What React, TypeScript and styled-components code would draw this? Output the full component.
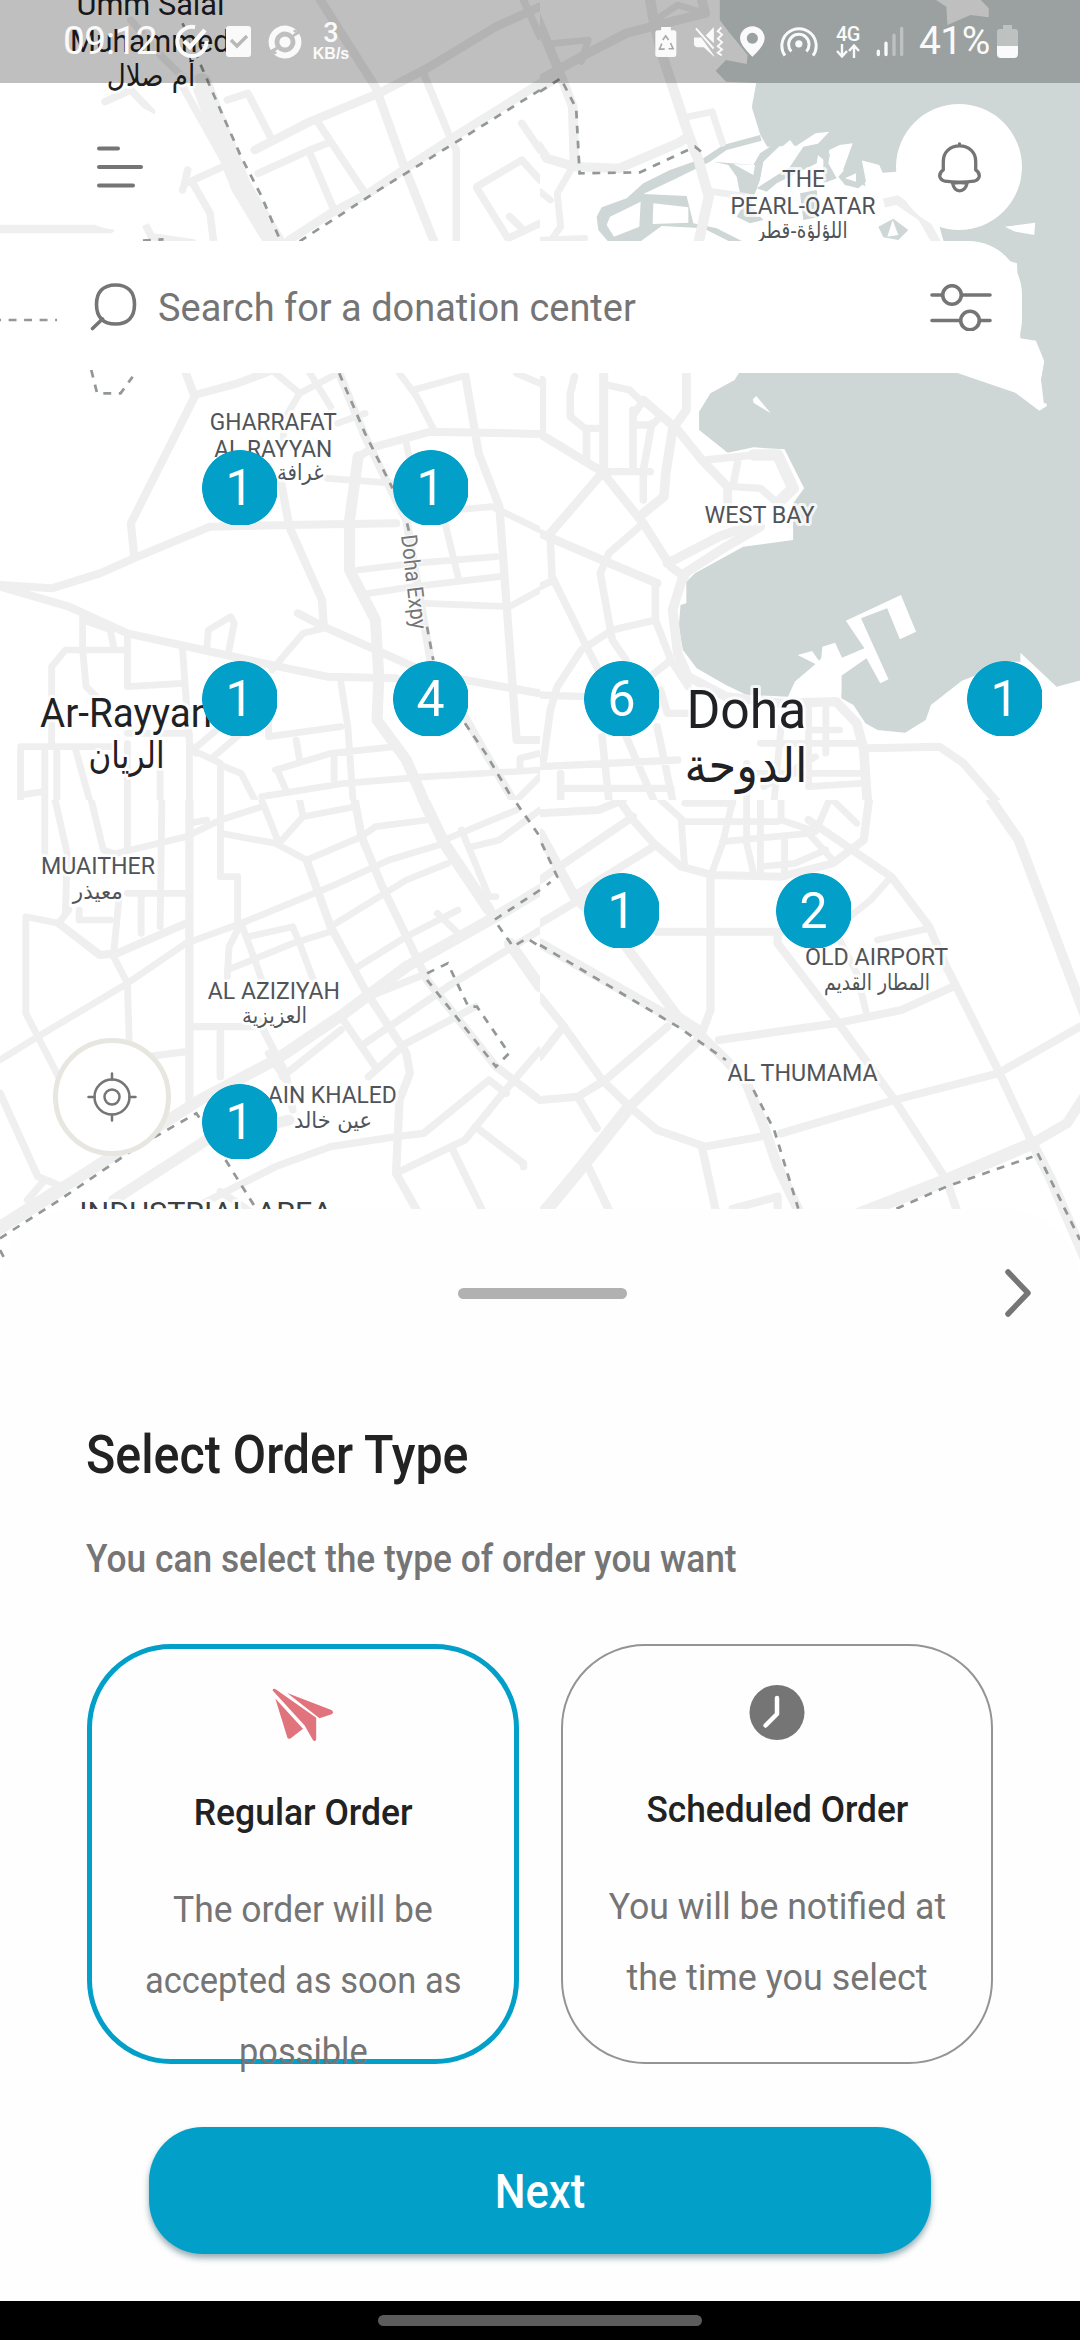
import React from "react";
import styled, { createGlobalStyle } from "styled-components";

const GREY = "#757575";
const BLUE = "#02a0c9";
const WATER = "#ced7d6";
const ROAD = "#efefef";

const GlobalStyle = createGlobalStyle`
  * { box-sizing: border-box; }
  body { margin: 0; background: #fff; font-family: Roboto, "Noto Sans", "DejaVu Sans", sans-serif; }
`;

const Screen = styled.div`
  position: relative;
  display: flex;
  flex-direction: column;
  width: 1080px;
  height: 2340px;
  overflow: hidden;
  background: #fff;
`;

const MapCanvas = styled.div`
  position: absolute;
  top: 0;
  left: 0;
  width: 1080px;
  height: 1300px;
  overflow: hidden;
`;

const MapSvg = styled.svg`
  display: block;
  width: 1080px;
  height: 1300px;
`;

const ClusterPin = styled.div<{ $x: number; $y: number }>`
  position: absolute;
  left: ${(p) => p.$x}px;
  top: ${(p) => p.$y}px;
  width: 75px;
  height: 75px;
  overflow: hidden;
  background: radial-gradient(circle at 38px 38px, ${BLUE} 37.5px, transparent 38.3px);
  color: #fff;
  font-size: 50px;
  line-height: 76px;
  text-align: center;
`;

const MapArea = styled.section`
  position: relative;
  display: flex;
  flex-direction: column;
  height: 1209px;
`;

const StatusBar = styled.header`
  display: flex;
  justify-content: space-between;
  height: 83px;
  padding: 0 62px 0 63px;
  background: rgba(0, 0, 0, 0.25);
  color: #fafafa;
`;

const StatusGroup = styled.div`
  display: flex;
  align-items: center;
`;

const StatusText = styled.span<{ $w: number; $ml?: number }>`
  width: ${(p) => p.$w}px;
  margin-left: ${(p) => p.$ml ?? 0}px;
  font-size: 39px;
  line-height: 81px;
  letter-spacing: -0.6px;
  white-space: nowrap;
`;

const StatusIcon = styled.svg<{ $ml: number }>`
  flex: none;
  margin-left: ${(p) => p.$ml}px;
`;

const NetSpeed = styled.div`
  display: flex;
  flex-direction: column;
  align-items: center;
  width: 38px;
  margin-left: 10px;
  font-family: "Liberation Sans", Arial, sans-serif;
  font-weight: 700;
  font-size: 16px;
  line-height: 16px;
  strong { font: 500 27px/25px Roboto, sans-serif; }
`;

const NetType = styled.div`
  display: flex;
  flex-direction: column;
  align-items: center;
  width: 26px;
  margin-left: 17px;
  font-weight: 500;
  font-size: 20px;
  line-height: 19px;
  letter-spacing: -0.5px;
`;

const Toolbar = styled.div`
  display: flex;
  justify-content: space-between;
  padding: 21px 58px 0 57px;
`;

const RoundButton = styled.button`
  display: flex;
  align-items: center;
  justify-content: center;
  width: 126px;
  height: 126px;
  padding: 0;
  border: 0;
  border-radius: 50%;
  background: #fff;
`;

const SearchBar = styled.div`
  display: flex;
  align-items: center;
  height: 132px;
  margin: 11px 58px 0 57px;
  padding: 0 30px 0 33px;
  border-radius: 54px;
  background: #fff;
`;

const SearchHint = styled.span`
  flex: 1;
  margin-left: 20px;
  color: ${GREY};
  font-size: 39px;
  line-height: 60px;
  transform: scaleX(0.973) translateY(1px);
  transform-origin: left;
`;

const LocateButton = styled(RoundButton)`
  width: 118px;
  height: 118px;
  margin: auto 0 53px 53px;
  border: 5px solid #e8e6e0;
`;

const Sheet = styled.section`
  position: relative;
  display: flex;
  flex-direction: column;
  height: 1092px;
  padding: 0 87px;
  border-radius: 76px 76px 0 0;
  background: #fefefe;
`;

const SheetTop = styled.div`
  display: grid;
  grid-template-columns: 1fr auto 1fr;
  align-items: center;
  height: 48px;
  margin: 59px -43px 0 -38px;
  svg { justify-self: end; }
`;

const Grabber = styled.span`
  grid-column: 2;
  width: 169px;
  height: 11px;
  border-radius: 6px;
  background: #b1b1b1;
`;

const Title = styled.h1`
  margin: 109px 0 0 -1px;
  color: #222;
  font-weight: 500;
  font-size: 54px;
  line-height: 60px;
  transform: scaleX(0.896);
  transform-origin: left;
`;

const Subtitle = styled.p`
  margin: 49px 0 0 -1px;
  color: ${GREY};
  font-weight: 500;
  font-size: 38px;
  line-height: 50px;
  white-space: nowrap;
  transform: scaleX(0.93);
  transform-origin: left;
`;

const Options = styled.div`
  display: grid;
  grid-template-columns: 432px 432px;
  gap: 42px;
  margin-top: 60px;
`;

const OptionCard = styled.article<{ $active?: boolean }>`
  display: flex;
  flex-direction: column;
  align-items: center;
  height: 420px;
  padding-top: 38px;
  border: ${(p) => (p.$active ? `5px solid ${BLUE}` : "2px solid #949494")};
  border-radius: 84px;
`;

const OptionIcon = styled.svg`
  flex: none;
  height: 56px;
`;

const OptionTitle = styled.h2<{ $sx: number }>`
  margin: 45px 0 37px;
  color: #222;
  font-weight: 500;
  font-size: 37px;
  line-height: 50px;
  white-space: nowrap;
  transform: scaleX(${(p) => p.$sx});
`;

const OptionLine = styled.span<{ $sx: number }>`
  flex: none;
  color: ${GREY};
  font-size: 36px;
  font-weight: 400;
  line-height: 71px;
  white-space: nowrap;
  transform: scaleX(${(p) => p.$sx});
`;

const NextButton = styled.button`
  align-self: center;
  width: 782px;
  height: 127px;
  margin-top: 63px;
  padding: 0 0 2px;
  border: 0;
  border-radius: 54px;
  background: ${BLUE};
  box-shadow: 0 4px 6px rgba(0, 60, 75, 0.42);
  color: #fff;
  font: 500 48px/60px Roboto, sans-serif;
  span { display: inline-block; transform: scaleX(0.905) translateY(2px); }
`;

const NavBar = styled.footer`
  display: flex;
  justify-content: center;
  align-items: center;
  height: 39px;
  background: #000;
`;

const NavHandle = styled.span`
  width: 324px;
  height: 11px;
  border-radius: 6px;
  background: #5c5c5c;
`;

/* ---------- map data: each tile has its own local units ---------- */

type Tile = { m: string; clip: string; roads: [number, string][]; dashes: string };

const sx = 0.34439;
const sy = 0.33333;

const tiles: Tile[] = [
  {
    m: `matrix(${sx} 0 0 ${sy} 0 0)`,
    clip: "M0,0H1568V1200H0Z",
    roads: [
      [26, "M0,687H320 M740,450L900,365L1100,280L1240,205L1440,80L1568,20 M930,0L1090,260L1170,490L1260,724 M840,720L960,640L1070,580L1200,490L1320,410L1568,250"],
      [60, "M585,250L640,400L700,560L800,730"],
      [22, "M520,240L650,480 M380,60L470,170L540,240 M660,300L720,280L790,420 M750,520L900,450L950,430 M900,460L970,630 M925,370L1060,580 M1230,220L1310,420L1325,450V724 M1520,0L1568,110 M1515,370L1568,450 M530,555L690,480 M545,510L530,570 M560,550L610,640L620,724 M425,680L440,710L560,728 M1385,560L1515,480L1568,540 M1385,565L1475,715L1568,670 M1480,650L1510,680 M380,270L440,335 M305,305L370,275"],
    ],
    dashes: "M530,70L585,200L640,330L700,470L760,590L815,724 M870,724L1100,570L1568,270 M415,722L475,718 M-20,960H168",
  },
  {
    m: `matrix(${sx} 0 0 ${sy} 540 0)`,
    clip: "M0,0H1568V1200H0Z",
    roads: [
      [28, "M-30,0L60,225L95,320L100,490 M-10,430L20,475L100,500L230,505L400,430L430,410 M0,240L120,170L250,100L400,60L480,40L470,0 M-10,270L60,225"],
      [30, "M320,0L330,60L350,150L430,400L460,480L490,590L460,730"],
      [20, "M95,500L50,580L60,680L30,724 M40,130L140,120L120,185 M430,350L500,335L530,430 M335,60L400,15L480,40 M0,575L30,600 M0,720L130,715 M500,575L600,590"],
    ],
    dashes: "M0,275L60,235L105,325L115,520L290,517L450,440L480,465",
  },
  {
    m: `matrix(${sx} 0 0 ${sy} 0 360)`,
    clip: "M0,0H1568V1320H0Z",
    roads: [
      [24, "M540,40L565,110L380,490L390,590 M565,105L690,70L780,35 M0,675L150,685L290,640L400,590L610,500L830,495L1150,490 M0,680L200,740L370,820L590,870L810,920L950,950L1150,955 M1040,290L1090,260L1250,215L1568,222 M1350,40L1390,280L1450,440L1500,1140H1568 M815,360L840,500L935,720L940,800 M865,760L940,800L1200,920L1350,960L1568,1000 M985,40L1060,230L1140,400L1180,480L1250,900 M1350,1070L1410,1180L1490,1320"],
      [32, "M1040,290L1015,480V630L1090,780L1100,950L1095,1080L1180,1200L1230,1320"],
      [20, "M800,40L870,100L980,40 M870,100L830,170L820,250 M900,40L960,140 M980,190L1060,160 M1160,40L1210,110L1260,210 M1200,90L1340,50 M940,805L880,820L830,880L790,930 M950,355L1150,370 M1040,630L1200,610L1440,590 M1070,700L1200,680L1450,650 M1290,480L1330,650 M1230,730L1480,740L1568,690 M1320,450L1430,440L1568,510 M1180,250L1210,400 M1500,40L1568,70"],
      [20, "M240,770V870L250,980L280,1010 M240,780L320,810L330,860 M150,1150V920L190,870H370 M370,820V980L530,970 M530,870L550,1150L570,1180 M600,870L605,810L670,770L680,790L665,870 M60,1320V1160H320 M130,1160V1320 M165,1160V1320 M220,1170L260,1320 M370,1120H550V1320 M370,1150V1320 M465,1150V1320 M60,1305L125,1295"],
      [20, "M570,1175L640,1210V1320 M560,1170L640,1100 M620,1190L700,1120 M640,1215L700,1240L740,1320 M780,1130L990,1100 M990,970L1010,1100L1025,1320 M780,1080V1130 M860,1140L870,1200 M800,1230L960,1180L1150,1160 M805,1230L830,1290 M760,1310L1000,1270L1240,1250L1568,1230 M1510,1230V1195L1568,1180 M1500,1320L1568,1250 M970,1190V1260"],
    ],
    dashes: "M985,40L1060,220L1140,385 M1182,490L1190,525 M1240,800L1258,900 M1350,1090L1410,1180L1490,1320 M265,30L282,100H350L385,50",
  },
  {
    m: `matrix(${sx} 0 0 ${sy} 540 360)`,
    clip: "M0,0H1568V1320H0Z",
    roads: [
      [26, "M5,60V225L180,335L300,490L380,620L420,650 M185,40V330 M300,120L400,210L470,300L545,380V430 M425,40V150L390,200 M0,520L180,600L340,670 M180,340L30,520"],
      [28, "M370,610L520,530L600,500 M420,640L540,560L640,500 M415,650L385,750L400,880L430,950L540,1010L700,1030L860,1025L920,1090L940,1170L950,1320 M385,210L365,340L360,410L300,460"],
      [34, "M620,285H690L735,385L690,430"],
      [22, "M100,50L88,100V170L130,205H180 M135,210V300 M195,75L260,90L300,130 M270,150V330 M300,120L275,160 M280,195H325L345,175 M325,190L300,330V420 M200,335H320 M480,300L620,285 M575,300L560,380L640,385L690,430 M300,490L200,580L175,640L210,840L250,900 M30,540L35,650L140,870L170,930 M0,680L40,660 M335,670V780L210,810L120,870L50,980L30,1050L10,1200 M335,780L380,900L430,980 M0,1005L130,1010 M250,900L270,950 M320,950L380,900 M350,990L370,1060H440 M340,1100L385,1320 M250,1130L330,1320 M180,1130L200,1320 M0,1220L400,1200 M60,1240V1320 M60,1285H380"],
      [20, "M780,1110H870 M780,1040V1280L930,1270 M830,1040V1180 M700,1100L680,1320 M640,1150H940 M600,1240H940 M650,1280L800,1190 M600,1210V1320"],
      [24, "M950,1165L1160,1160L1230,1210L1330,1330"],
    ],
    dashes: "",
  },
  {
    m: `matrix(${sx} 0 0 ${sy} 0 800)`,
    clip: "M0,0H1568V1440H0Z",
    roads: [
      [20, "M130,0V160 M160,0L195,160L190,340 M75,350L170,370L200,330 M75,360V640L170,830 M265,0L300,150L330,160 M370,0V150 M470,0L465,380 M330,460L345,300 M330,470L370,550L375,720 M0,780L110,710L370,550L540,430L700,370L960,260L1130,180L1290,130 M340,160L540,110L640,60L760,20 M640,0V230H690V370 M230,330V360H320 M370,280H540 M410,290V400"],
      [24, "M550,0V920 M170,370L290,465L340,460L540,370 M890,180L960,380L1060,570L1180,760L1190,820L1160,900L1150,1120L1210,1230 M1030,0L1050,110L1110,260L1190,430L1240,540L1440,800L1568,900"],
      [20, "M640,100L800,130L890,180 M760,0L810,130L880,50L1030,20 M870,0L880,50 M890,180L1050,110L1090,80L1240,60 M1340,90L1420,290H1440 M1290,120L1500,30 M1370,140L1450,120L1568,30 M960,395L850,430L660,510 M700,370L740,480L760,540 M700,370L665,440L660,530 M720,410L850,380L870,430L910,540 M1040,500L1180,410L1330,330 M1270,340L1330,400 M960,380L1180,240L1300,190 M550,70L600,60"],
      [34, "M1230,0L1290,130L1420,330 M180,1165L580,900L800,780L1000,640L1180,500L1440,350L1568,270 M1480,430L1568,560"],
      [40, "M-10,1290L180,1165"],
      [32, "M330,1200L600,1020L840,960"],
      [22, "M1070,590L1240,520 M820,830L990,690 M1060,730L1300,560L1568,390 M990,650L1090,800 M750,660L830,820L850,930 M640,680V830 M560,680H740 M430,770L540,755 M0,880L110,1130L180,1160 M80,1200L130,1140 M590,1210L800,1100L960,1040L1150,1010L1230,1000L1420,840L1470,880 M1070,830L1180,730L1380,620 M1150,1120L1350,1020L1460,880L1568,750 M1380,980L1520,1090V1100 M1310,1040L1400,1230 M640,1175L720,1230 M780,760L830,840"],
    ],
    dashes: "M0,1315L180,1195L400,1040L570,940L590,970 M655,1080L740,1220 M1500,10L1568,110 M1568,270L1435,360L1490,440L1530,415L1568,440 M1240,520L1300,490L1360,620H1385L1478,760L1440,800L1240,540 M0,1350L18,1385",
  },
  {
    m: `matrix(${sx} 0 0 ${sy} 540 800)`,
    clip: "M0,0H1568V1440H0Z",
    roads: [
      [24, "M0,40L170,30L240,0 M230,0L270,60L330,130L410,200L500,225L700,230L850,190L940,120L955,0 M0,240L270,50 M110,280L330,140 M0,370L130,290 M340,395H700 M690,400V430L860,660L1030,900L1180,1140L1210,1230 M495,230V630L470,700 M780,60L1020,230L1130,380L1180,500L1330,810L1430,1030"],
      [20, "M350,0L420,65H690 M410,60L420,200 M560,0L530,130L495,230 M600,0V130L620,220 M640,0V220 M700,0V60L800,95L840,0 M530,125L780,100L850,180 M710,110V230 M640,200L740,190L830,150 M850,0L920,70 M420,10H560 M870,420L920,520L950,650 M900,350L960,300L1020,230 M980,420L1130,385"],
      [30, "M0,100L100,290L250,440L400,650L460,690 M0,430L460,700L540,780L600,850L650,980L690,1100L750,1230 M460,720L260,920"],
      [24, "M520,720L860,670L1050,630L1200,560 M700,1000L1030,900L1330,820L1568,680 M0,590L70,680L180,840L260,920L340,990L480,1040L640,1010 M0,770L60,690 M370,680L190,840L110,890L0,900 M110,890L165,985 M140,1100L200,1230 M470,1040L510,1230 M560,1226L690,1190V1226"],
      [38, "M260,920L130,1090L10,1240 M930,1240L1180,1140L1430,1030"],
      [30, "M1430,1030L1530,970L1580,890 M1310,0L1390,120L1580,640 M1430,1030L1480,1130L1580,1370"],
    ],
    dashes: "M5,130L50,230L20,255 M0,435L400,680L540,780 M620,870L680,990L750,1226 M1035,1226L1180,1160L1430,1070 M1445,1060L1568,1320",
  },
];

type Label = [string, number, number, number, number, string, boolean?];
/* text, centre x, width, baseline, size, colour, arabic */
const labels: Label[] = [
  ["Umm Salal", 150.5, 148, 15, 31, "#1f2124"],
  ["أم صلال", 151, 88.5, 85.5, 30, "#1f2124", true],
  ["Muhammed", 150, 160, 52.3, 31, "#1f2124"],
  ["THE", 803.6, 43, 186.7, 23.5, "#505459"],
  ["PEARL-QATAR", 803, 145, 213.7, 23.5, "#505459"],
  ["اللؤلؤة-قطر", 802, 91, 237.5, 22, "#505459", true],
  ["GHARRAFAT", 273.3, 127, 429.5, 23.5, "#505459"],
  ["AL RAYYAN", 273.3, 118, 456.7, 23.5, "#505459"],
  ["غرافة الريان", 273, 101, 480, 22, "#505459", true],
  ["WEST BAY", 759.5, 110, 523.3, 23.5, "#505459"],
  ["Ar-Rayyan", 126, 172, 726.7, 40, "#1f2124"],
  ["الريان", 126.6, 76, 768, 37, "#1f2124", true],
  ["Doha", 746.4, 120, 727.7, 53, "#1f2124"],
  ["الدوحة", 746, 123, 782, 48, "#1f2124", true],
  ["MUAITHER", 98, 114, 874, 23.5, "#505459"],
  ["معيذر", 97.8, 50, 898.5, 22, "#505459", true],
  ["AL AZIZIYAH", 273.8, 132, 999.3, 23.5, "#505459"],
  ["العزيزية", 274.6, 65, 1023, 22, "#505459", true],
  ["AIN KHALED", 332.3, 129, 1102.7, 23.5, "#505459"],
  ["عين خالد", 333, 78, 1127.5, 22, "#505459", true],
  ["OLD AIRPORT", 876.6, 143, 965, 23.5, "#505459"],
  ["المطار القديم", 877, 106, 989.5, 22, "#505459", true],
  ["AL THUMAMA", 802.6, 150, 1080.7, 23.5, "#505459"],
  ["INDUSTRIAL AREA", 205.8, 253, 1222.5, 29, "#3c4043"],
];

const pins: [number, number, string][] = [
  [202, 450, "1"],
  [393, 450, "1"],
  [202, 661, "1"],
  [393, 661, "4"],
  [584, 661, "6"],
  [967, 661, "1"],
  [584, 873, "1"],
  [776, 873, "2"],
  [202, 1084, "1"],
];

function CityMap() {
  return (
    <MapCanvas>
      <MapSvg viewBox="0 0 1080 1300">
        <g transform={`matrix(${sx} 0 0 ${sy} 540 0)`}>
          <path fill={WATER} d="M522,0V60L548,95L540,180L510,212L540,245L628,249L615,322L640,405L660,440L745,437L800,400L840,395L790,450L835,490L840,450L870,435L908,430L880,510L945,560L930,480L985,495L995,518L1035,515L1160,680L1172,724L1385,790L1395,1015L1440,1022L1465,1085L1455,1140L1463,1210H1568V0Z" />
          <path fill="#fff" d="M1150,0L1180,20L1183,75L1250,45L1303,52V25L1280,0Z M1350,680L1438,668L1435,705L1380,695Z" />
          <path fill="#fff" d="M540,180L600,192L603,165L548,95L530,130Z" />
        </g>
        <g transform="matrix(.33333 0 0 .33333 590 120)">
          <path fill={WATER} d="M20,290L35,262L110,235L160,190L240,150L340,115L400,75L510,45L515,62L410,90L360,125L260,175L160,222L290,228L310,310L380,325L460,365H420L340,325L215,318L150,365H55L25,330Z" />
          <path fill="#fff" d="M60,290L152,245L148,320L72,350L50,315Z M190,250L295,262V308L188,312Z" />
          <path fill={WATER} d="M370,125L490,135L510,100L585,50V62L520,125L510,180L480,260L450,220L440,170L415,135Z" />
          <path fill="#fff" d="M430,132L495,135L490,165Z" />
          <path fill={WATER} d="M500,205L600,140L640,80L690,70L680,130L640,150L560,190L530,215Z M700,110L720,100L715,130L740,175L700,190Z M745,170L790,120L815,118L828,185L805,205L765,195Z M865,320L910,296L955,330L925,360L880,352Z M470,240L520,300L480,310L440,290Z M630,220L680,210L690,290L640,300Z" />
          <path fill="#fff" d="M765,175L798,160V185Z M908,300L925,345L892,350Z M520,180L540,110L600,60L615,80L560,160Z" />
        </g>
        <g transform={`matrix(${sx} 0 0 ${sy} 540 360)`}>
          <path fill={WATER} d="M578,38L565,60L495,100L462,155V210L545,278L620,262L710,268L767,385L735,430V540L590,560L450,640L425,665V730L408,735L403,800L415,870L455,925L540,975L600,1005L720,1010L740,965L800,915L820,890L875,920V1015L910,1035L945,1090L980,1110L1060,1118L1120,1080L1135,1035L1225,962L1365,905H1395V878L1500,980L1580,958V0H1465L1455,60L1472,138L1450,152L1380,98L1210,38Z" />
          <path fill="#fff" d="M618,118L628,108L670,160L620,128Z M748,885L790,873L815,910L820,860L857,848L877,893L942,865L888,782L1048,705L1092,815L1045,838L1008,745L932,775L1012,958L988,970L948,895L875,947V1000H760L740,965L800,912Z" />
        </g>
        {tiles.map((t, i) => (
          <g key={i} transform={t.m}>
            <clipPath id={`tile${i}`}>
              <path d={t.clip} />
            </clipPath>
            <g clipPath={`url(#tile${i})`} fill="none" strokeLinejoin="round" strokeLinecap="round">
              {t.roads.map(([w, d], k) => (
                <path key={k} d={d} stroke={ROAD} strokeWidth={w} />
              ))}
            </g>
          </g>
        ))}
        <path d="M884,203L897,200L922,217L938,245" stroke={ROAD} strokeWidth="9" fill="none" />
        {tiles.map((t, i) => (
          <path key={i} d={t.dashes} transform={t.m} fill="none" stroke="#929897" strokeWidth="8" strokeDasharray="23 22" />
        ))}
        {labels.map(([text, x, w, y, size, color, ar]) => (
          <text
            key={text}
            x={x}
            y={y}
            textAnchor="middle"
            textLength={w}
            lengthAdjust="spacingAndGlyphs"
            direction={ar ? "rtl" : "ltr"}
            fontFamily={ar ? '"DejaVu Sans", sans-serif' : "Roboto, sans-serif"}
            fontSize={size}
            fill={color}
            stroke="rgba(255,255,255,.75)"
            strokeWidth="6"
            strokeLinejoin="round"
            paintOrder="stroke"
          >
            {text}
          </text>
        ))}
        <text
          transform="translate(401 535.5) rotate(83.5)"
          textLength="95"
          lengthAdjust="spacingAndGlyphs"
          fontFamily="Roboto, sans-serif"
          fontSize="22.5"
          fill="#757575"
          stroke="rgba(255,255,255,.6)"
          strokeWidth="3"
          paintOrder="stroke"
        >
          Doha Expy
        </text>
      </MapSvg>
      {pins.map(([x, y, n]) => (
        <ClusterPin key={`${x}-${y}`} $x={x} $y={y}>
          {n}
        </ClusterPin>
      ))}
    </MapCanvas>
  );
}

function Status() {
  return (
    <StatusBar>
      <StatusGroup>
        <StatusText $w={97}>09:12</StatusText>
        <StatusIcon $ml={15} width="34" height="36" viewBox="0 0 34 36" fill="none" stroke="#fafafa" strokeWidth="4">
          <path d="M20 3.2A14.6 14.6 0 1 0 31.5 17" />
          <path d="M9 17l6 6L30 6" strokeWidth="4.5" />
        </StatusIcon>
        <StatusIcon $ml={17} width="25" height="31" viewBox="0 0 25 31">
          <rect width="25" height="31" rx="3" fill="#fafafa" />
          <path d="M5 14l6 6 10-10" fill="none" stroke="#b8b8b8" strokeWidth="3.4" />
        </StatusIcon>
        <StatusIcon $ml={17} width="34" height="34" viewBox="0 0 34 34" fill="none" stroke="#fafafa">
          <circle cx="17" cy="17" r="5.6" fill="#fafafa" stroke="none" />
          <circle cx="17" cy="17" r="13.4" strokeWidth="6" strokeDasharray="38.500 3.600" transform="rotate(-30 17 17)" />
          <path d="M25.500 6.500l3-1M8.500 27.500l-3 1" stroke="#bebebe" strokeWidth="2.200" />
        </StatusIcon>
        <NetSpeed>
          <strong>3</strong>KB/s
        </NetSpeed>
      </StatusGroup>
      <StatusGroup>
        <StatusIcon $ml={0} width="22" height="32" viewBox="38 46 68 96">
          <path fill="#fafafa" d="M57 48h30v10h9q8 0 8 8v66q0 8-8 8H47q-8 0-8-8V66q0-8 8-8h10z" />
          <path fill="none" stroke="#a8a8a8" strokeWidth="5" d="M62 88l9-13 9 13M86 97l8 18H80M68 116H52l7-17" />
        </StatusIcon>
        <StatusIcon $ml={17} width="30" height="31" viewBox="156 48 92 93">
          <path fill="#fafafa" d="M156 82h22l40 56V141L186 112h-20q-10-2-10-10zM192 76l25-26v50z" />
          <path fill="none" stroke="#fafafa" strokeWidth="6" d="M162 54l54 62M240 51l-11 12 13 10-13 13 13 11-13 12 13 10-13 10 12 8" />
        </StatusIcon>
        <StatusIcon $ml={16} width="25" height="31" viewBox="293 47 77 94">
          <path fill="#fafafa" fillRule="evenodd" d="M331 47a38 38 0 0 1 38 38q0 20-38 56q-38-36-38-56a38 38 0 0 1 38-38zm0 20a17 17 0 1 0 .1 0z" />
        </StatusIcon>
        <StatusIcon $ml={15} width="38" height="33" viewBox="415 43 115 100" fill="none" stroke="#fafafa" strokeWidth="9">
          <circle cx="472" cy="100" r="11" fill="#fafafa" stroke="none" />
          <path d="M430 136a52 52 0 1 1 85 0M449 123a31 31 0 1 1 46 0" />
        </StatusIcon>
        <NetType>
          4G
          <svg width="24" height="14" viewBox="0 0 24 14" fill="none" stroke="#fafafa" strokeWidth="2.4">
            <path d="M6 0v12M1 7l5 5.5L11 7M18 14V2M13 7l5-5.5L23 7" />
          </svg>
        </NetType>
        <StatusIcon $ml={15} width="28" height="31" viewBox="705 49 84 92" strokeWidth="10" strokeLinecap="round">
          <path stroke="#fafafa" d="M712 124v10M735 100v34" />
          <path stroke="#bdc2c1" d="M759 76v58M782 56v78" />
        </StatusIcon>
        <StatusText $w={72} $ml={15}>41%</StatusText>
        <StatusIcon $ml={6} width="21" height="33" viewBox="0 0 21 33">
          <path fill="#bdc2c1" d="M6 0h9v4h3q3 0 3 3v14H0V7q0-3 3-3h3z" />
          <path fill="#fafafa" d="M0 21h21v8q0 4-4 4H4q-4 0-4-4z" />
        </StatusIcon>
      </StatusGroup>
    </StatusBar>
  );
}

export default function App() {
  return (
    <Screen>
      <GlobalStyle />
      <CityMap />
      <MapArea>
        <Status />
        <Toolbar>
          <RoundButton aria-label="Menu">
            <svg width="46" height="42" viewBox="0 0 46 42" stroke={GREY} strokeWidth="4" strokeLinecap="round">
              <path d="M2 2.5H21M2 21H44M2 39.5H36" />
            </svg>
          </RoundButton>
          <RoundButton aria-label="Notifications">
            <svg width="43" height="51" viewBox="1043 66 130 153" fill="none" stroke={GREY} strokeWidth="10" strokeLinejoin="round" strokeLinecap="round">
              <path d="M1108 71V77M1108 77C1078 77 1059 98 1059 124V150C1050 156 1048 162 1048 168Q1049 180 1064 184Q1108 190 1152 184Q1167 180 1168 168C1168 162 1166 156 1157 150V124C1157 98 1138 77 1108 77Z" />
              <path d="M1087 190Q1092 213 1108 213Q1126 213 1131 190Q1110 186 1087 190Z" />
            </svg>
          </RoundButton>
        </Toolbar>
        <SearchBar>
          <svg width="48" height="48" viewBox="0 0 48 48" fill="none" stroke={GREY} strokeWidth="3.6" strokeLinecap="round">
            <path d="M25.500 2C38 2 44.500 9 44.500 21.500S38 41 25.500 41S6.500 34 6.500 21.500S13 2 25.500 2Z" />
            <path d="M12.500 36L2.500 45.500" />
          </svg>
          <SearchHint>Search for a donation center</SearchHint>
          <svg width="62" height="47" viewBox="0 0 62 47" fill="none" stroke={GREY} strokeWidth="3.6" strokeLinecap="round">
            <path d="M2 11H12M32 11H60M2 36.500H30M50 36.500H60" />
            <circle cx="22" cy="11" r="9.3" />
            <circle cx="40" cy="36.5" r="9.3" />
          </svg>
        </SearchBar>
        <LocateButton aria-label="My location">
          <svg width="50" height="50" viewBox="0 0 50 50" fill="none" stroke={GREY} strokeWidth="2.5" strokeLinecap="round">
            <circle cx="25" cy="25" r="17.5" />
            <circle cx="25" cy="25" r="7.5" />
            <path d="M25 1.500V7.500M25 42.500V48.500M1.500 25H7.500M42.500 25H48.500" />
          </svg>
        </LocateButton>
      </MapArea>
      <Sheet>
        <SheetTop>
          <Grabber />
          <svg width="32" height="50" viewBox="0 0 32 50" fill="none" stroke={GREY} strokeWidth="5.5" strokeLinecap="round" strokeLinejoin="round">
            <path d="M4 4L24 25L4 46" />
          </svg>
        </SheetTop>
        <Title>Select Order Type</Title>
        <Subtitle>You can select the type of order you want</Subtitle>
        <Options>
          <OptionCard $active>
            <OptionIcon width="62" viewBox="634 206 188 168" fill="#e0737b">
              <path d="M636 216Q635 209 644 211L768 298V364Q764 372 758 366L733 322Z" />
              <path d="M644 240L728 332L690 361Q684 364 681 360Z" />
              <path d="M680 223L814 275Q823 281 815 288L778 300Z" />
            </OptionIcon>
            <OptionTitle $sx={0.958}>Regular Order</OptionTitle>
            <OptionLine $sx={0.985}>The order will be</OptionLine>
            <OptionLine $sx={0.958}>accepted as soon as</OptionLine>
            <OptionLine $sx={0.955}>possible</OptionLine>
          </OptionCard>
          <OptionCard>
            <OptionIcon width="56" viewBox="0 0 56 56">
              <circle cx="28" cy="28.500" r="27.500" fill={GREY} />
              <path d="M28 14V30L16.500 41.500" fill="none" stroke="#fff" strokeWidth="4.5" strokeLinecap="round" strokeLinejoin="round" />
            </OptionIcon>
            <OptionTitle $sx={0.953}>Scheduled Order</OptionTitle>
            <OptionLine $sx={0.99}>You will be notified at</OptionLine>
            <OptionLine $sx={0.997}>the time you select</OptionLine>
          </OptionCard>
        </Options>
        <NextButton>
          <span>Next</span>
        </NextButton>
      </Sheet>
      <NavBar>
        <NavHandle />
      </NavBar>
    </Screen>
  );
}
